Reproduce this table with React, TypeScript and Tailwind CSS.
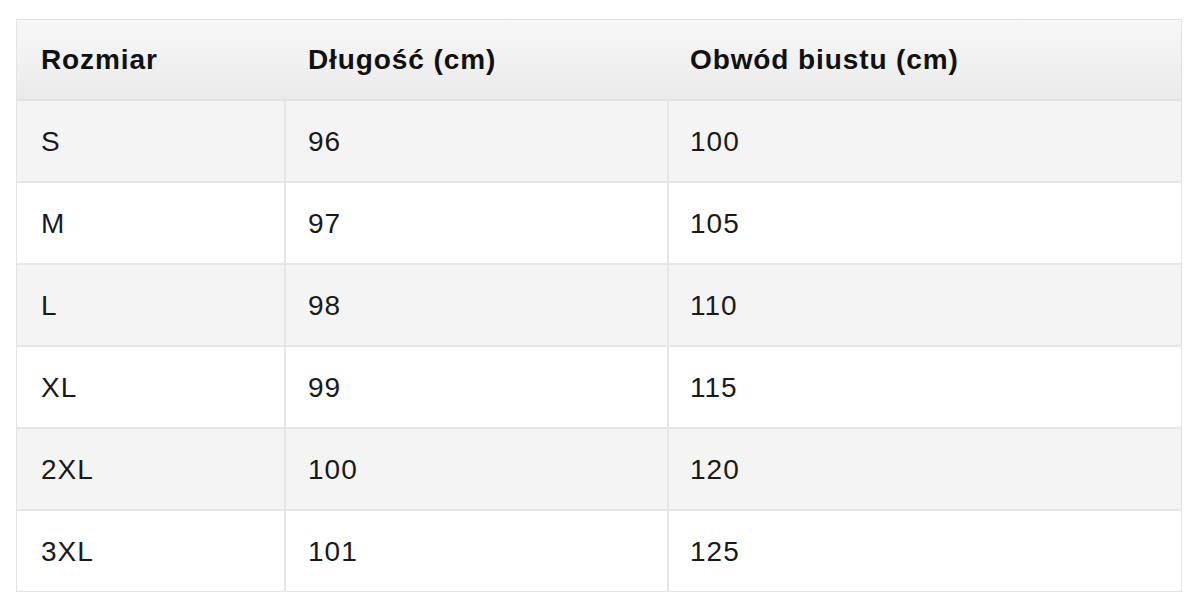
import React from 'react';

// Size chart table
const rows: [string, string, string][] = [
  ['S', '96', '100'],
  ['M', '97', '105'],
  ['L', '98', '110'],
  ['XL', '99', '115'],
  ['2XL', '100', '120'],
  ['3XL', '101', '125'],
];

export default function App() {
  return (
    <div className="w-[1200px] h-[608px] bg-white pt-[19px] pl-[16px] font-['Liberation_Sans',Arial,sans-serif]">
      <div className="w-[1166px] border border-[#e3e3e3]">
        {/* Header */}
        <div className="grid grid-cols-[267px_383px_1fr] h-[81px] border-b-2 border-[#e2e2e2] bg-gradient-to-b from-[#f7f7f7] to-[#ebebeb] text-[28px] tracking-[0.9px] font-bold text-[#111]">
          <div className="flex items-center pl-[24px]">Rozmiar</div>
          <div className="flex items-center pl-[24px]">Długość (cm)</div>
          <div className="flex items-center pl-[23px]">Obwód biustu (cm)</div>
        </div>

        {/* Body */}
        {rows.map(([size, len, bust], i) => (
          <div
            key={size}
            className={`grid grid-cols-[267px_383px_1fr] text-[28px] tracking-[1px] text-[#1a1a1a] ${
              i % 2 === 0 ? 'bg-[#f4f4f4]' : 'bg-white'
            } ${i < rows.length - 1 ? 'h-[82px] border-b-2 border-[#e6e6e6]' : 'h-[80px]'}`}
          >
            <div className="flex items-center pl-[24px] pt-[1px]">{size}</div>
            <div className="flex items-center pl-[22px] pt-[1px] border-l-2 border-[#e6e6e6]">{len}</div>
            <div className="flex items-center pl-[21px] pt-[1px] border-l-2 border-[#e6e6e6]">{bust}</div>
          </div>
        ))}
      </div>
    </div>
  );
}
